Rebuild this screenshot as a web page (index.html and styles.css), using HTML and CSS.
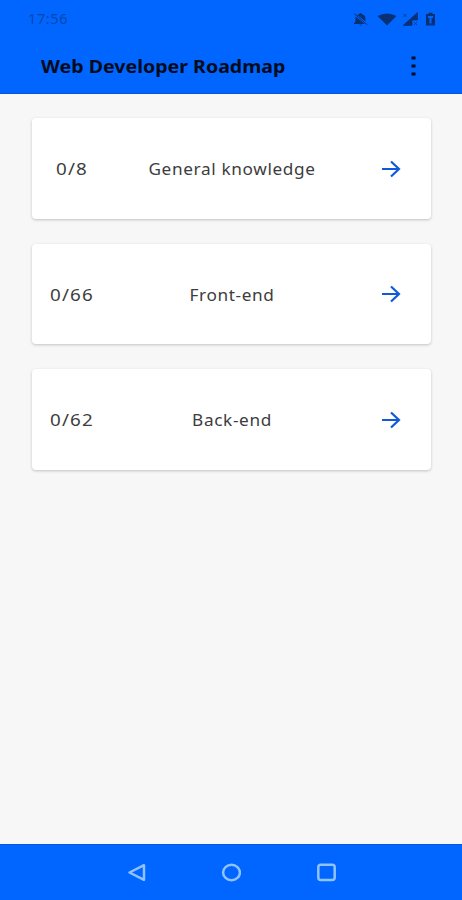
FILE: index.html
```html
<!DOCTYPE html>
<html lang="en">
<head>
<meta charset="utf-8">
<title>Web Developer Roadmap</title>
<link rel="stylesheet" href="styles.css">
</head>
<body>
<div class="screen">
  <header class="header">
    <div class="status">
      <span class="clock">17:56</span>
      <svg class="status-icons" width="85" height="18" viewBox="0 0 85 18">
        <path d="M5 5.200Q6.300 4 7.800 3.700V3H9.200V3.700Q13.500 4.500 13.500 9V11.500L5 4.700ZM3.500 6.500L12.800 14H2V13L3.500 11.500ZM7 14.700H10Q8.500 17 7 14.700Z"/>
        <path d="M2 3.500L15.500 15" fill="none" stroke="#073174" stroke-width="1"/>
        <path d="M25.500 6Q35 1 44.500 6L35 15.500Z"/>
        <path d="M65.500 2.500V10H60V15.500H51ZM51.500 4l3 3M54.500 4l-3 3M62 12l3 3M65 12l-3 3" stroke="#073174" stroke-width=".7"/>
        <path d="M74 4H76.500V2.700H80.500V4H83V15.500H74ZM76 6V8H77.500V13.500H79.500V8H81V6Z" fill-rule="evenodd"/>
      </svg>
    </div>
    <div class="toolbar">
      <h1 class="title">Web Developer Roadmap</h1>
      <svg class="more" width="6" height="22" viewBox="0 0 6 22"><path d="M1.500 1.500h4v3h-4zM1.500 9.500h4v3h-4zM1.500 17.500h4v3h-4z"/></svg>
    </div>
  </header>
  <main class="list">
    <section class="card">
      <span class="count">0/8</span><span class="name">General knowledge</span>
      <svg class="arrow" width="20" height="18" viewBox="0 0 20 18"><path d="M1 9H18M10 1.500L18 9L10 16.500"/></svg>
    </section>
    <section class="card">
      <span class="count">0/66</span><span class="name">Front-end</span>
      <svg class="arrow" width="20" height="18" viewBox="0 0 20 18"><path d="M1 9H18M10 1.500L18 9L10 16.500"/></svg>
    </section>
    <section class="card">
      <span class="count">0/62</span><span class="name">Back-end</span>
      <svg class="arrow" width="20" height="18" viewBox="0 0 20 18"><path d="M1 9H18M10 1.500L18 9L10 16.500"/></svg>
    </section>
  </main>
  <nav class="nav">
    <svg width="20" height="20" viewBox="0 0 20 20"><path d="M3.500 9.500L18 2.200V16.800Z"/></svg>
    <svg width="20" height="20" viewBox="0 0 20 20"><ellipse cx="10.500" cy="9.500" rx="8.400" ry="7.700"/></svg>
    <svg width="20" height="20" viewBox="0 0 20 20"><rect x="2.300" y="1.800" width="16.400" height="15.200" rx="2.500"/></svg>
  </nav>
</div>
</body>
</html>
```
FILE: styles.css
```css
* { box-sizing: border-box; }
body { margin: 0; font-family: "Noto Sans", sans-serif; }
.screen { width: 462px; height: 900px; display: flex; flex-direction: column; background: #f7f7f7; }
.header { height: 94px; background: #0066ff; border-bottom: 1px solid #0755d8; }
.status { height: 36px; padding: 0 25px 0 28px; display: flex; align-items: center; justify-content: space-between; }
.clock { font-size: 14.500px; letter-spacing: .6px; color: #0848ac; }
.status-icons { fill: #073174; margin-top: 1px; }
.toolbar { height: 58px; padding: 2px 46px 0 41px; display: flex; align-items: center; justify-content: space-between; }
.title { margin: 0; font-size: 18px; line-height: 24px; font-weight: 700; letter-spacing: 0; color: #020b1c; white-space: nowrap; transform: scaleX(1.087); transform-origin: left; }
.more { fill: #020b1c; }
.list { flex: 1; padding: 24px 31px 0 32px; display: flex; flex-direction: column; gap: 25px; }
.card { height: 100.500px; padding: 1px 30px 0 0; display: grid; grid-template-columns: 80px 240px 20px; justify-content: space-between; align-items: center; background: #fff; border-radius: 4px; box-shadow: 0 1px 3px rgba(0,0,0,.22); font-size: 16.500px; letter-spacing: 1px; color: #3d3d3d; }
.count { text-align: center; transform: scaleX(1.14); }
.name { text-align: center; white-space: nowrap; font-size: 16px; letter-spacing: .6px; padding-top: 1px; margin-left: -10px; margin-right: 20px; transform: scaleX(1.075); }
.arrow { fill: none; stroke: #1159d8; stroke-width: 2.200; }
.nav { height: 56px; display: flex; align-items: center; justify-content: center; gap: 75px; background: #0066ff; border-top: 1px solid #0755e5; }
.nav svg { fill: none; stroke: #8fc2ff; stroke-width: 2.500; stroke-linejoin: round; }
```
